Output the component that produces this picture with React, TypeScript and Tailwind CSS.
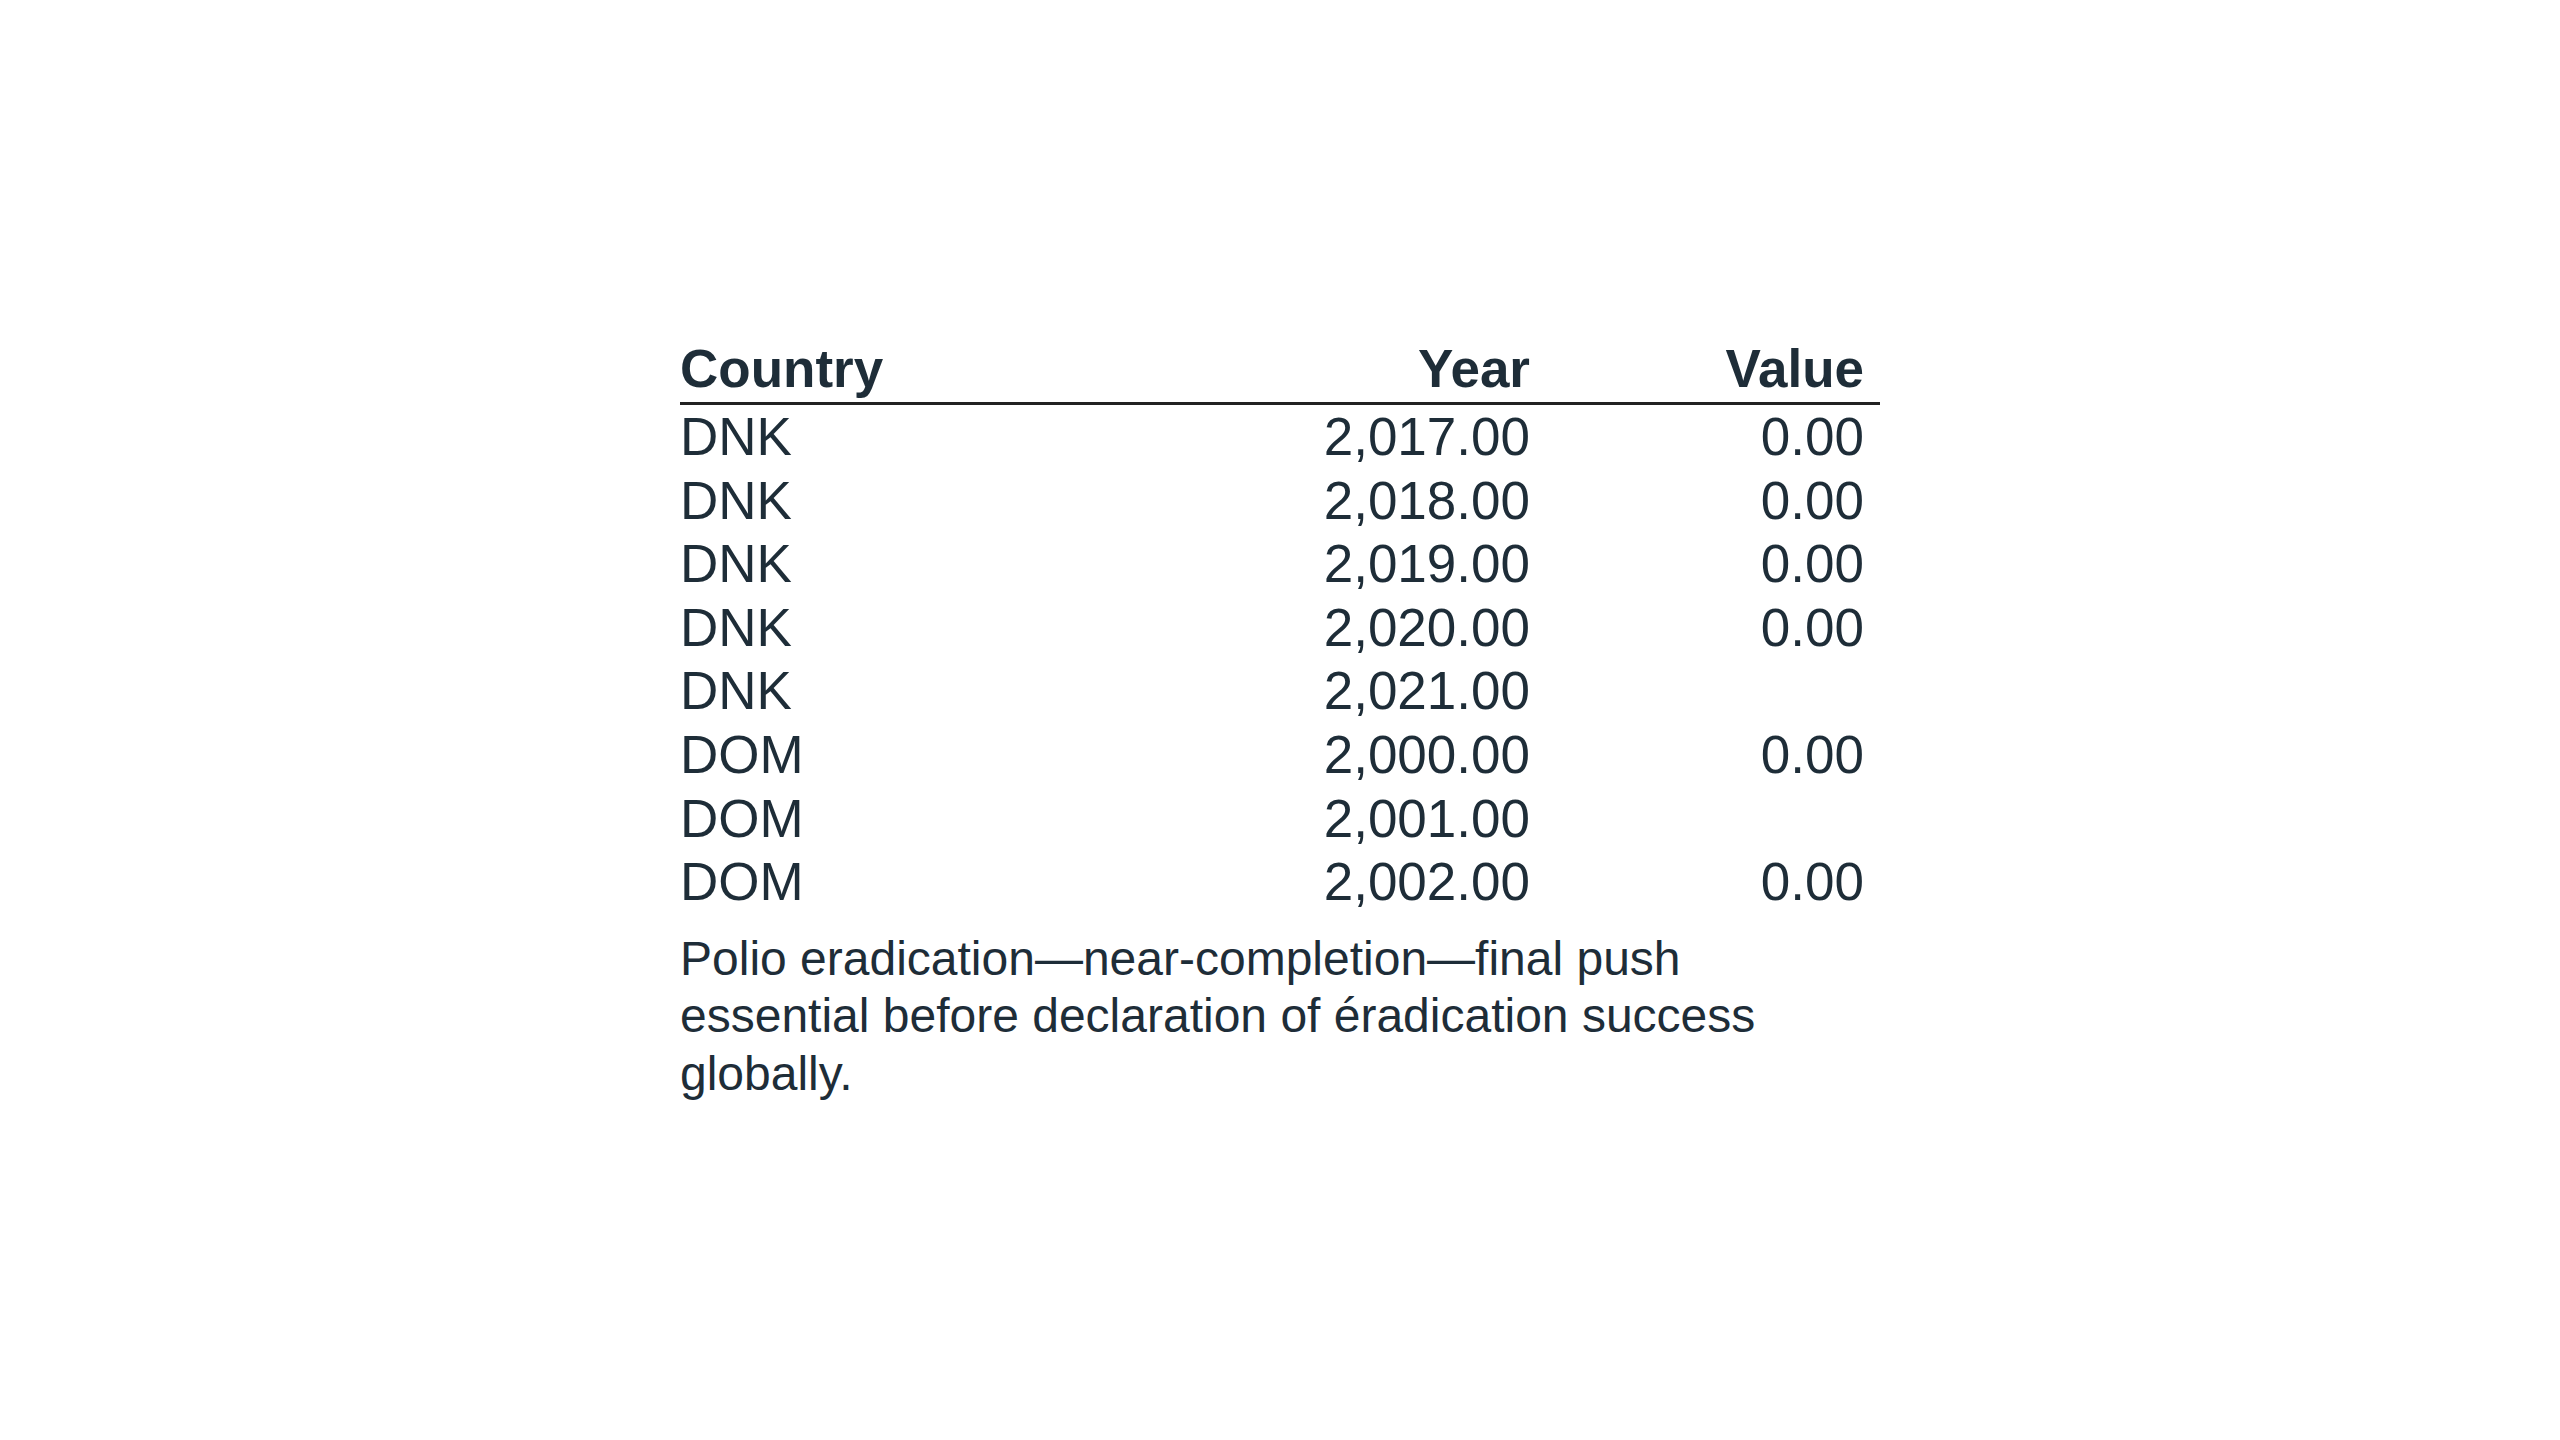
const rows: { country: string; year: string; value: string }[] = [
  { country: "DNK", year: "2,017.00", value: "0.00" },
  { country: "DNK", year: "2,018.00", value: "0.00" },
  { country: "DNK", year: "2,019.00", value: "0.00" },
  { country: "DNK", year: "2,020.00", value: "0.00" },
  { country: "DNK", year: "2,021.00", value: "" },
  { country: "DOM", year: "2,000.00", value: "0.00" },
  { country: "DOM", year: "2,001.00", value: "" },
  { country: "DOM", year: "2,002.00", value: "0.00" },
];

export default function App() {
  return (
    <div className="min-h-screen w-full bg-white flex items-center justify-center font-['Liberation_Sans',Arial,sans-serif] text-[#1e2d38]">
      <div className="w-[1200px]">
        <table className="w-full border-collapse text-[53px] leading-[1.2]">
          <colgroup>
            <col className="w-[500px]" />
            <col className="w-[366px]" />
            <col className="w-[334px]" />
          </colgroup>
          <thead>
            <tr className="border-b-[3px] border-[#222222]">
              <th className="text-left font-bold pb-px pl-0 pr-4">Country</th>
              <th className="text-right font-bold pb-px pr-4">Year</th>
              <th className="text-right font-bold pb-px pr-4">Value</th>
            </tr>
          </thead>
          <tbody>
            {rows.map((r, i) => (
              <tr key={i}>
                <td className="text-left pl-0 pr-4">{r.country}</td>
                <td className="text-right pr-4">{r.year}</td>
                <td className="text-right pr-4">{r.value}</td>
              </tr>
            ))}
          </tbody>
        </table>
        <p className="mt-4 w-[1150px] text-[48px] leading-[1.2]">
          Polio eradication—near-completion—final push essential before declaration of éradication success globally.
        </p>
      </div>
    </div>
  );
}
